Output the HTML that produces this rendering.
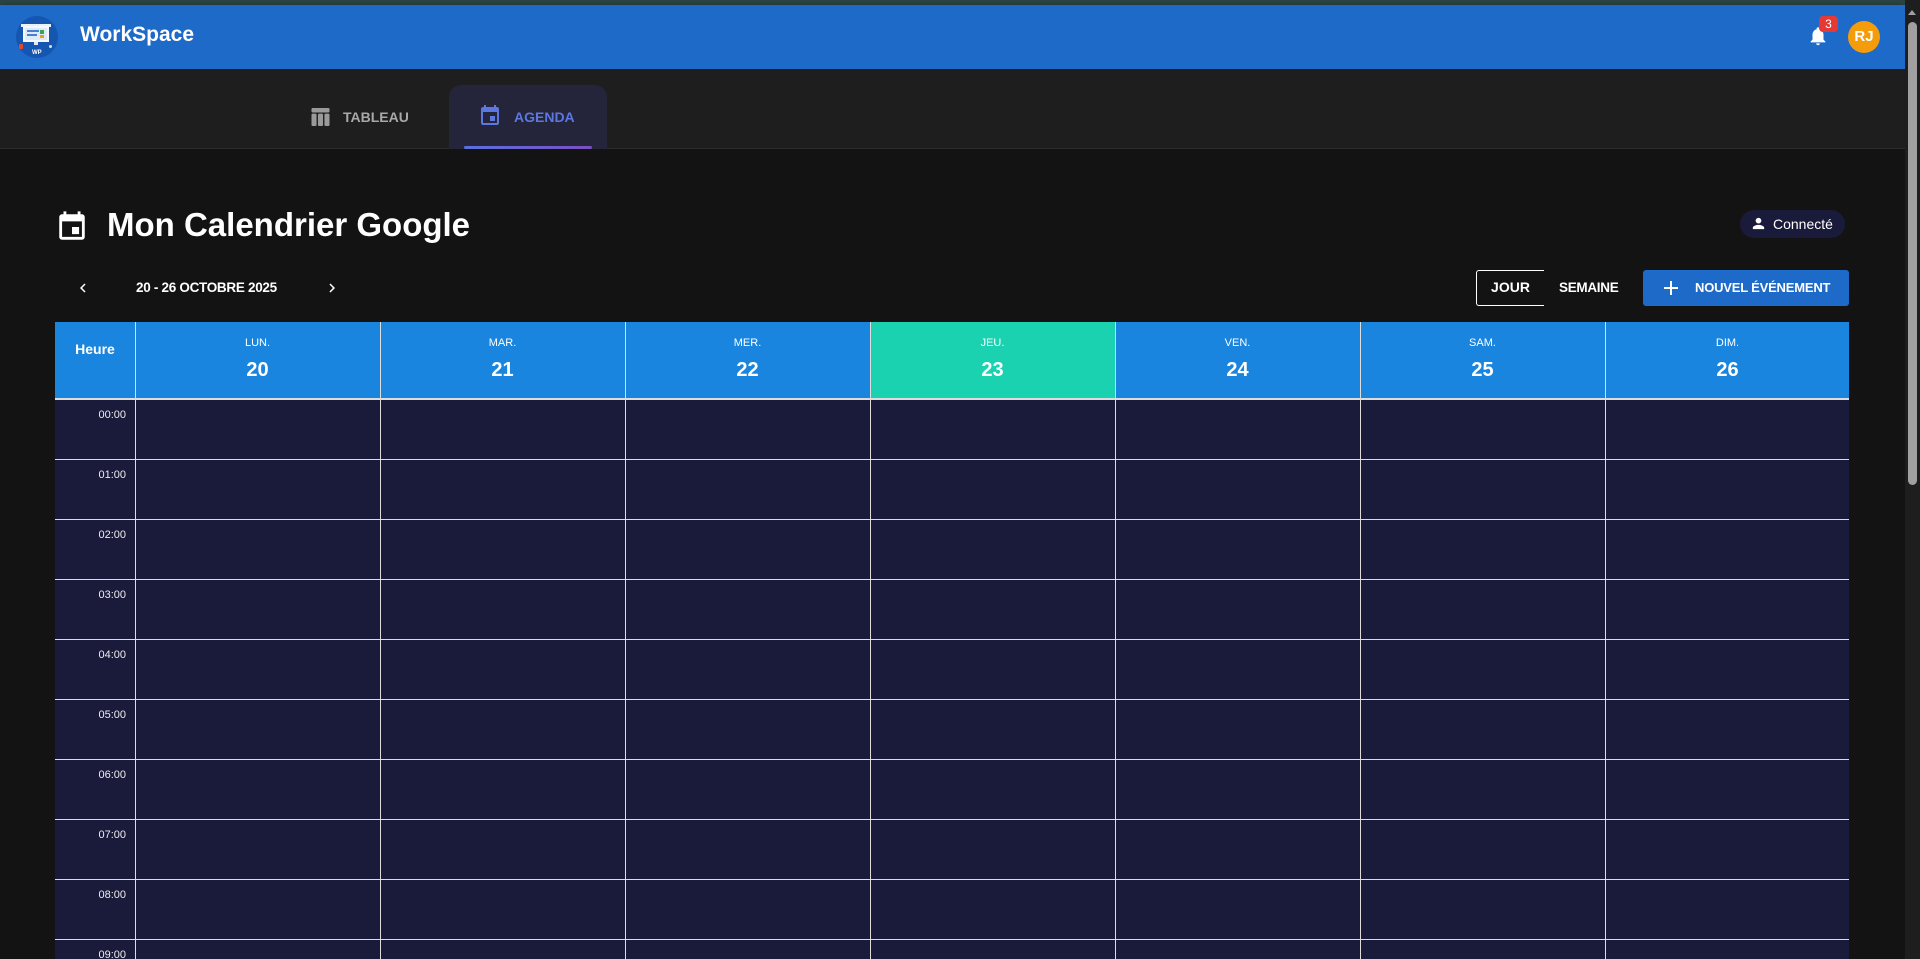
<!DOCTYPE html>
<html><head><meta charset="utf-8"><style>
*{box-sizing:border-box;margin:0;padding:0}
body{width:1920px;height:959px;overflow:hidden;background:#131313;font-family:"Liberation Sans",sans-serif;color:#fff;position:relative}
.abs{position:absolute}
</style></head><body>
<div class="abs" style="left:0;top:0;width:1920px;height:5px;background:#2b4545"></div>
<div class="abs" style="left:0;top:5px;width:1905px;height:64px;background:#1e6ac8;box-shadow:0 3px 8px rgba(0,0,0,.6)"></div>
<!-- logo -->
<div class="abs" style="left:16px;top:16px;width:42px;height:42px;border-radius:50%;background:#1556b0"></div>
<div class="abs" style="left:21px;top:24px;width:30px;height:3px;background:#e8f0fa"></div>
<div class="abs" style="left:23px;top:26px;width:26px;height:16px;background:#dfe9f7;border:2px solid #f4f8fd"></div>
<div class="abs" style="left:27px;top:30px;width:12px;height:2px;background:#4a7fd0"></div>
<div class="abs" style="left:27px;top:34px;width:10px;height:2px;background:#4a7fd0"></div>
<div class="abs" style="left:40px;top:30px;width:4px;height:4px;background:#3aa64a"></div>
<div class="abs" style="left:40px;top:35px;width:4px;height:3px;background:#e0a020"></div>
<div class="abs" style="left:34px;top:42px;width:4px;height:3px;background:#dfe9f7"></div>
<div class="abs" style="left:19px;top:44px;width:4px;height:5px;background:#e8452c;border-radius:1px"></div>
<div class="abs" style="left:49px;top:45px;width:3px;height:3px;background:#ddd;border-radius:50%"></div>
<div class="abs" style="left:32px;top:50px;font-size:6px;font-weight:bold">WP</div>
<div class="abs" style="left:80px;top:23px;font-size:21px;font-weight:bold">WorkSpace</div>
<!-- bell -->
<svg class="abs" style="left:1807px;top:25px" width="22" height="22" viewBox="0 0 24 24"><path fill="#fff" d="M12 22c1.1 0 2-.9 2-2h-4c0 1.1.9 2 2 2zm6-6v-5c0-3.07-1.640-5.64-4.5-6.32V4c0-.83-.67-1.5-1.5-1.5s-1.5.67-1.5 1.5v.68C7.63 5.36 6 7.920 6 11v5l-2 2v1h16v-1l-2-2z"/></svg>
<div class="abs" style="left:1819px;top:16px;width:19px;height:16px;border-radius:4px;background:#e53935;font-size:12px;text-align:center;line-height:16px">3</div>
<div class="abs" style="left:1848px;top:21px;width:32px;height:32px;border-radius:50%;background:#f59c0b;font-size:15px;font-weight:bold;text-align:center;line-height:32px">RJ</div>
<!-- tabs -->
<div class="abs" style="left:0;top:69px;width:1905px;height:80px;background:#1e1e1e;border-bottom:1px solid #2c2c2c"></div>
<svg class="abs" style="left:311px;top:108px" width="19" height="18" viewBox="0 0 16 16"><g fill="#9a9a9a"><rect x="0" y="0" width="16" height="4" rx="1"/><rect x="0" y="5" width="4.5" height="11" rx="1"/><rect x="5.75" y="5" width="4.5" height="11" rx="1"/><rect x="11.5" y="5" width="4.5" height="11" rx="1"/></g></svg>
<div class="abs" style="left:343px;top:109px;font-size:14px;color:#a8a8a8;font-weight:bold">TABLEAU</div>
<div class="abs" style="left:449px;top:85px;width:158px;height:64px;background:#24243a;border-radius:12px 12px 0 0"></div>
<svg class="abs" style="left:478px;top:104px" width="24" height="24" viewBox="0 0 24 24"><path fill="#5c78e0" d="M17 12h-5v5h5v-5zM16 1v2H8V1H6v2H5c-1.11 0-1.99.9-1.99 2L3 19c0 1.1.89 2 2 2h14c1.1 0 2-.9 2-2V5c0-1.1-.9-2-2-2h-1V1h-2zm3 18H5V8h14v11z"/></svg>
<div class="abs" style="left:514px;top:109px;font-size:14px;color:#5c78e0;font-weight:bold">AGENDA</div>
<div class="abs" style="left:464px;top:146px;width:128px;height:3px;background:linear-gradient(90deg,#5b6fe0,#7a4fc0);border-radius:2px"></div>
<!-- title -->
<svg class="abs" style="left:55px;top:210px" width="34" height="34" viewBox="0 0 24 24"><path fill="#fff" d="M17 12h-5v5h5v-5zM16 1v2H8V1H6v2H5c-1.11 0-1.99.9-1.99 2L3 19c0 1.1.89 2 2 2h14c1.1 0 2-.9 2-2V5c0-1.1-.9-2-2-2h-1V1h-2zm3 18H5V8h14v11z"/></svg>
<div class="abs" style="left:107px;top:206px;font-size:33px;font-weight:bold">Mon Calendrier Google</div>
<div class="abs" style="left:1740px;top:210px;width:105px;height:28px;border-radius:14px;background:#1a1a3a"></div>
<svg class="abs" style="left:1750px;top:215px" width="17" height="17" viewBox="0 0 24 24"><path fill="#fff" d="M12 12c2.21 0 4-1.79 4-4s-1.79-4-4-4-4 1.79-4 4 1.79 4 4 4zm0 2c-2.670 0-8 1.34-8 4v2h16v-2c0-2.66-5.33-4-8-4z"/></svg>
<div class="abs" style="left:1773px;top:216px;font-size:14px">Connecté</div>
<!-- nav -->
<svg class="abs" style="left:74px;top:279px" width="18" height="18" viewBox="0 0 24 24"><path fill="#fff" d="M15.4 7.4L14 6l-6 6 6 6 1.4-1.4L10.8 12z"/></svg>
<div class="abs" style="left:136px;top:280px;font-size:13.5px;font-weight:bold;letter-spacing:-0.3px">20 - 26 OCTOBRE 2025</div>
<svg class="abs" style="left:323px;top:279px" width="18" height="18" viewBox="0 0 24 24"><path fill="#fff" d="M8.6 16.6L10 18l6-6-6-6-1.4 1.4L13.2 12z"/></svg>
<div class="abs" style="left:1476px;top:270px;width:68px;height:36px;border:1.5px solid #fff;border-right:none;border-radius:3px 0 0 3px;font-size:14px;font-weight:bold;text-align:center;line-height:33px">JOUR</div>
<div class="abs" style="left:1559px;top:280px;font-size:13.5px;font-weight:bold;letter-spacing:-0.3px">SEMAINE</div>
<div class="abs" style="left:1643px;top:270px;width:206px;height:36px;background:#1e6ac8;border-radius:3px"></div>
<svg class="abs" style="left:1662px;top:279px" width="18" height="18" viewBox="0 0 18 18"><path stroke="#fff" stroke-width="2" d="M9 2v14M2 9h14"/></svg>
<div class="abs" style="left:1695px;top:280px;font-size:13px;font-weight:bold;letter-spacing:-0.2px">NOUVEL ÉVÉNEMENT</div>
<!-- calendar -->
<div class="abs" style="left:55px;top:322px;width:1794px;height:637px;background:#1a1a3a;overflow:hidden">
<div style="position:absolute;left:0;top:0;width:1794px;height:78px;background:#1985de;border-bottom:2px solid #ddd"></div>
<div style="position:absolute;left:815px;top:0;width:245px;height:76px;background:#1ad1b0"></div>
<div style="position:absolute;left:0;top:19px;width:80px;text-align:center;font-size:14px;font-weight:bold">Heure</div>
<div id="g"></div>
</div>
<div class="abs" style="left:1905px;top:0;width:15px;height:959px;background:#1e1e1e"></div>
<div class="abs" style="left:1908px;top:22px;width:9px;height:463px;background:#a0a0a0;border-radius:5px"></div>
<div class="abs" style="left:1908px;top:10px;width:0;height:0;border-left:4px solid transparent;border-right:4px solid transparent;border-bottom:5px solid #a0a0a0"></div>
<script>
var g=document.getElementById('g'),h='';
var d=['LUN.','MAR.','MER.','JEU.','VEN.','SAM.','DIM.'];
for(var i=0;i<7;i++){var x=80+i*245;
h+='<div style="position:absolute;left:'+x+'px;top:0;width:1px;height:640px;background:#ddd"></div>';
h+='<div style="position:absolute;left:'+x+'px;top:15px;width:245px;text-align:center;font-size:11px">'+d[i]+'</div>';
h+='<div style="position:absolute;left:'+x+'px;top:37px;width:245px;text-align:center;font-size:20px;font-weight:bold">'+(20+i)+'</div>';}
for(var r=0;r<10;r++){var y=78+r*60;
h+='<div style="position:absolute;left:0;top:'+(y+59)+'px;width:1794px;height:1px;background:#ddd"></div>';
h+='<div style="position:absolute;left:0;top:'+(y+9)+'px;width:71px;text-align:right;font-size:11px;color:#eee">0'+r+':00</div>';}
g.innerHTML=h;
</script>
</body></html>
